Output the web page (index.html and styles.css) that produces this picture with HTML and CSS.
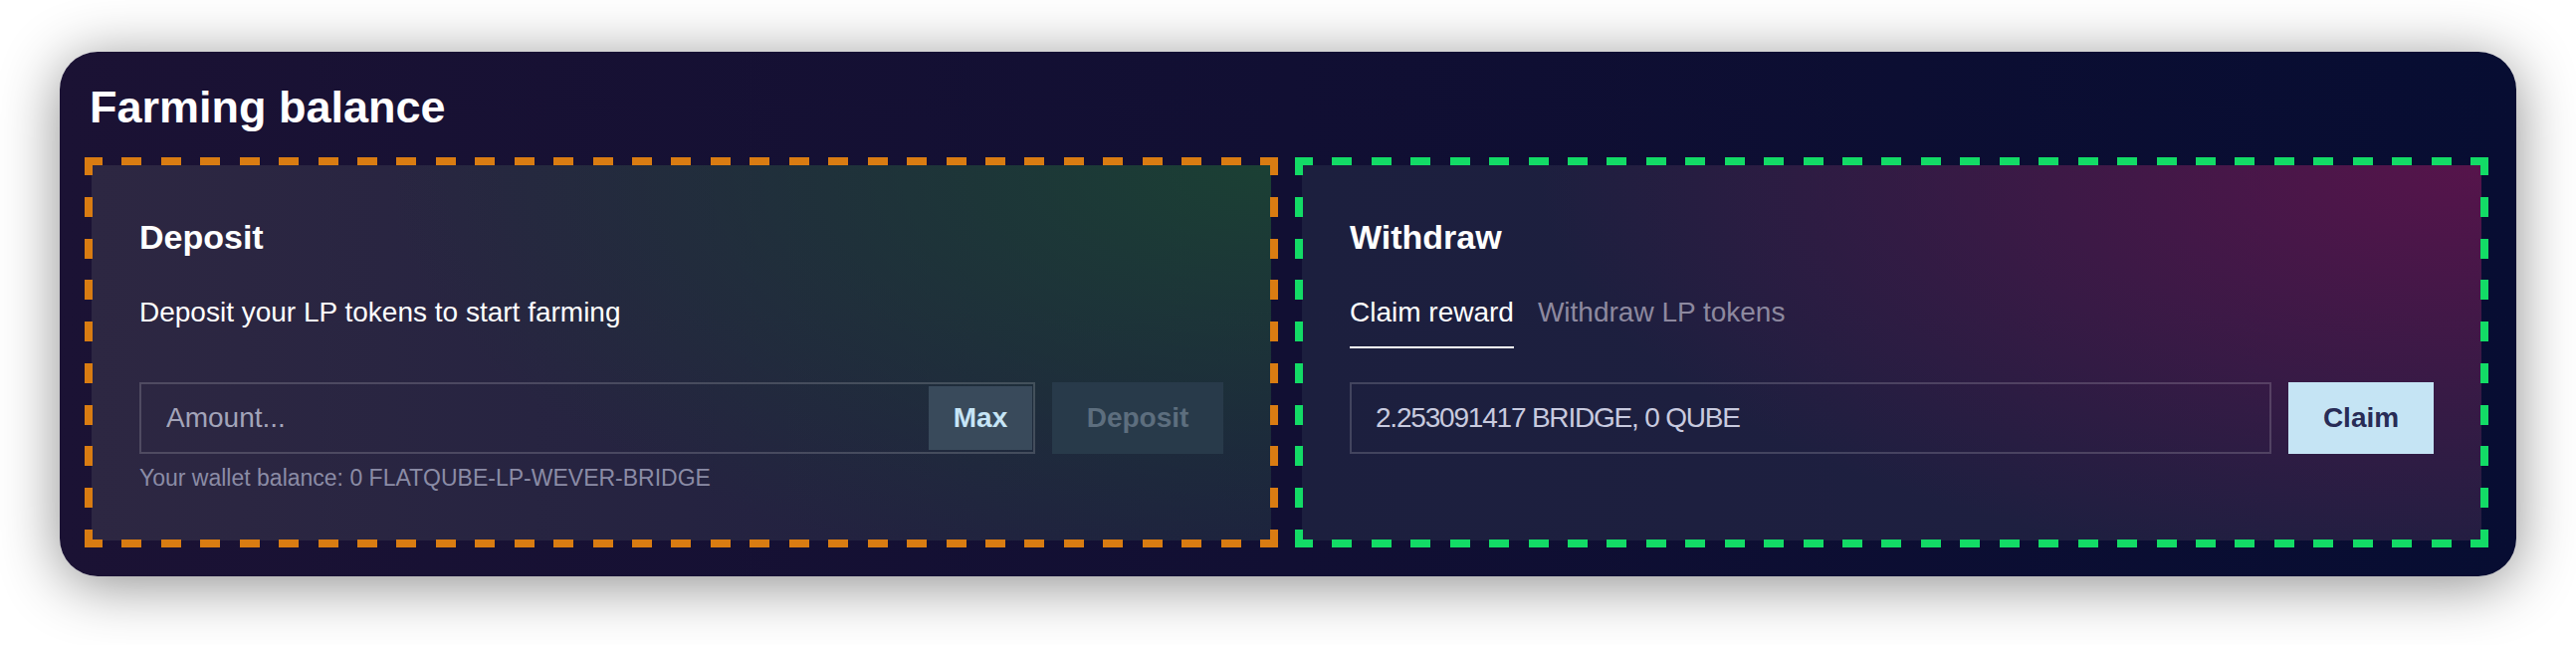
FILE: index.html
```html
<!DOCTYPE html>
<html lang="en">
<head>
<meta charset="utf-8">
<title>Farming balance</title>
<link rel="stylesheet" href="styles.css">
</head>
<body>
<div class="card">
  <h1 class="card-title">Farming balance</h1>
  <div class="panels">
    <section class="panel panel-deposit">
      <h2 class="panel-title">Deposit</h2>
      <p class="panel-text">Deposit your LP tokens to start farming</p>
      <div class="row">
        <div class="field">
          <input class="field-input" type="text" placeholder="Amount...">
          <button class="max-btn" type="button">Max</button>
        </div>
        <button class="btn btn-deposit" type="button">Deposit</button>
      </div>
      <div class="hint">Your wallet balance: 0 FLATQUBE-LP-WEVER-BRIDGE</div>
    </section>
    <section class="panel panel-withdraw">
      <h2 class="panel-title">Withdraw</h2>
      <div class="tabs">
        <span class="tab tab-active">Claim reward</span>
        <span class="tab">Withdraw LP tokens</span>
      </div>
      <div class="row">
        <div class="field field-readonly">
          <span class="field-value">2.253091417 BRIDGE, 0 QUBE</span>
        </div>
        <button class="btn btn-claim" type="button">Claim</button>
      </div>
    </section>
  </div>
</div>
</body>
</html>
```

FILE: styles.css
```css
* {
  box-sizing: border-box;
  margin: 0;
  padding: 0;
}

html {
  min-height: 100%;
  background: #ffffff;
}

body {
  min-height: 648px;
  padding: 52px 60px 0;
  background: #ffffff;
  font-family: "Liberation Sans", Arial, sans-serif;
  color: #ffffff;
}

.card {
  height: 527px;
  padding: 33px 35px 36px 32px;
  border-radius: 38px;
  background: linear-gradient(90deg, #1b1234 0%, #110f33 50%, #070d32 100%);
  box-shadow: 0 8px 60px rgba(0, 0, 0, 0.45);
}

.card-title {
  margin: 0 0 36px -2px;
  font-size: 45px;
  line-height: 45px;
  font-weight: 700;
  color: #ffffff;
}

.panels {
  display: flex;
  gap: 31px;
  height: 377px;
}

.panel {
  --dash: #d97c12;
  position: relative;
  flex: 1;
  min-width: 0;
  padding: 52px 48px 0 48px;
}

/* dashed annotation frame drawn over the panel edge */
.panel::before {
  content: "";
  position: absolute;
  top: -8px;
  right: -7px;
  bottom: -7px;
  left: -7px;
  pointer-events: none;
  background:
    repeating-linear-gradient(90deg, var(--dash) 0 18px, transparent 18px 37.433px, var(--dash) 37.433px 39.433px) left top / 100% 8px no-repeat,
    repeating-linear-gradient(90deg, var(--dash) 0 18px, transparent 18px 37.433px, var(--dash) 37.433px 39.433px) left bottom / 100% 8px no-repeat,
    repeating-linear-gradient(180deg, var(--dash) 0 18px, transparent 18px 39.778px, var(--dash) 39.778px 41.778px) left top / 8px 100% no-repeat,
    repeating-linear-gradient(180deg, var(--dash) 0 18px, transparent 18px 39.778px, var(--dash) 39.778px 41.778px) right top / 8px 100% no-repeat;
}

.panel-deposit {
  --dash: #d97c12;
  background:
    radial-gradient(ellipse 75% 115% at 100% 0%, rgba(27, 64, 52, 1) 0%, rgba(27, 64, 52, 0) 100%),
    linear-gradient(90deg, #2d2742 0%, #1d1f3f 100%);
}

.panel-withdraw {
  --dash: #13db66;
  background:
    radial-gradient(ellipse 80% 110% at 100% 0%, #56144b 0%, rgba(86, 20, 75, 0) 100%),
    linear-gradient(90deg, #1c1f3e 0%, #1f1f41 100%);
}

.panel-title {
  margin-bottom: 39px;
  font-size: 34px;
  line-height: 40px;
  font-weight: 700;
  color: #ffffff;
}

.panel-text {
  margin-bottom: 53px;
  font-size: 28px;
  line-height: 34px;
  color: #ffffff;
}

.tabs {
  display: flex;
  gap: 24px;
  margin-bottom: 34px;
}

.tab {
  padding-bottom: 17px;
  border-bottom: 2px solid transparent;
  font-size: 28px;
  line-height: 34px;
  color: #8d899f;
}

.tab-active {
  color: #ffffff;
  border-bottom-color: #ffffff;
}

.row {
  display: flex;
  gap: 17px;
  height: 72px;
}

.field {
  flex: 1;
  min-width: 0;
  display: flex;
  align-items: center;
  padding: 2px 1px 2px 0;
  border: 2px solid rgba(255, 255, 255, 0.17);
}

.field-readonly {
  padding-left: 24px;
}

.field-input {
  flex: 1;
  min-width: 0;
  height: 100%;
  padding-left: 25px;
  border: 0;
  outline: none;
  background: transparent;
  font-family: inherit;
  font-size: 28px;
  color: #ffffff;
}

.field-input::placeholder {
  color: #a3a4b9;
  opacity: 1;
}

.field-value {
  font-size: 28px;
  letter-spacing: -1.2px;
  color: #c8cadf;
}

.max-btn {
  width: 104px;
  height: 100%;
  border: 0;
  background: #394a5b;
  font-family: inherit;
  font-size: 28px;
  font-weight: 700;
  color: #c6e5f6;
}

.btn {
  height: 100%;
  border: 0;
  font-family: inherit;
  font-size: 28px;
  font-weight: 700;
}

.btn-deposit {
  width: 172px;
  background: #283a4a;
  color: #5d6e7e;
}

.btn-claim {
  width: 146px;
  background: #c5e4f4;
  color: #282c56;
}

.hint {
  margin-top: 10px;
  font-size: 23px;
  line-height: 28px;
  color: #8b8ca6;
}
```
